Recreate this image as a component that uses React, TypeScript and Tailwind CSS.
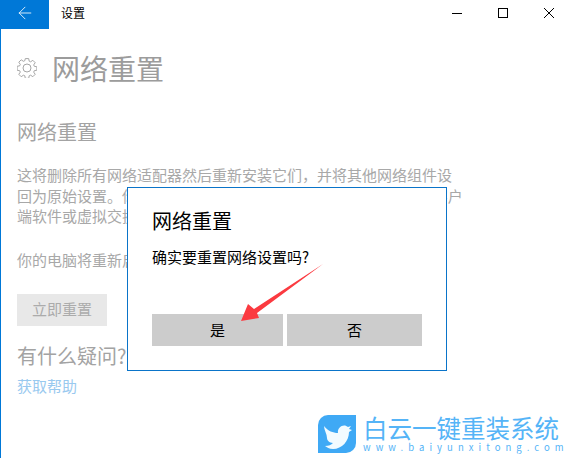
import { ArrowLeft } from "lucide-react";

const cjk = "font-['Noto_Sans_CJK_SC','Noto_Sans',sans-serif]";

function TitleBar() {
  return (
    <div className="flex h-[29px] items-start">
      <div className="flex h-full w-[48px] items-start justify-center bg-[#0078d7] pt-[3px]">
        <ArrowLeft className="h-5 w-5 text-white" strokeWidth={1} />
      </div>
      <span className="ml-3 pt-[4px] text-xs leading-[18px] text-black">设置</span>
      <div className="ml-auto flex h-[26px] items-center gap-[36px] pr-[17px]">
        <div className="h-px w-[10px] bg-black" />
        <div className="h-[10px] w-[10px] border border-black" />
        <svg className="h-[10px] w-[10px]" viewBox="0 0 10 10" stroke="black" strokeWidth="1">
          <path d="M0 0L10 10M10 0L0 10" />
        </svg>
      </div>
    </div>
  );
}

function GearIcon() {
  return (
    <svg className="h-5 w-5" viewBox="0 0 20 20" fill="none" stroke="#a6a6a6" strokeWidth="1">
      <path d="M8.3 .6h3.4l.5 2.6 1.4.6 2.2-1.5 2.4 2.4-1.5 2.2.6 1.4 2.6.5v3.4l-2.6.5-.6 1.4 1.5 2.2-2.4 2.4-2.2-1.5-1.4.6-.5 2.6H8.3l-.5-2.6-1.4-.6-2.2 1.5-2.4-2.4 1.5-2.2-.6-1.4-2.6-.5V8.3l2.6-.5.6-1.4L1.800 4.200l2.400-2.400 2.200 1.500 1.400-.6z" />
      <circle cx="10" cy="10" r="4" />
    </svg>
  );
}

function ResetPage() {
  return (
    <div className="flex flex-col pl-4">
      <div className="mt-[19px] flex h-10 items-center">
        <GearIcon />
        <h1 className="ml-[15px] text-[28px] leading-10 text-[#9c9c9c]">网络重置</h1>
      </div>
      <h2 className="mt-[30px] text-xl leading-7 text-[#a3a3a3]">网络重置</h2>
      <p className="mt-[19px] w-[448px] text-[15px] leading-[20.5px] text-[#a8a8a8] [word-spacing:2.5px]">
        这将删除所有网络适配器然后重新安装它们，并将其他网络组件设回为原始设置。你可能需要重新安装其他网络软件，比如 VPN 客户端软件或虚拟交换机软件。
      </p>
      <p className="mt-[23px] text-[15px] leading-5 text-[#a8a8a8]">你的电脑将重新启动。</p>
      <button className="mt-[24px] h-8 w-[90px] bg-[#e8e8e8] text-[15px] text-[#ababab]">立即重置</button>
      <h3 className="mt-4 text-xl leading-7 text-[#a3a3a3]">有什么疑问?</h3>
      <a className="mt-[6px] text-[15px] leading-5 text-[#99c9ef]">获取帮助</a>
    </div>
  );
}

function ConfirmDialog() {
  return (
    <div className="absolute left-[126px] top-[187px] flex h-[184px] w-[320px] flex-col border border-[#0a74c9] bg-white px-6 pt-[19px] text-black">
      <h2 className="text-xl leading-7">网络重置</h2>
      <p className="mt-[12px] text-[15px] leading-5">确实要重置网络设置吗?</p>
      <div className="mt-[47px] flex gap-1">
        <button className="h-8 w-[131px] bg-[#cccccc] text-[15px]">是</button>
        <button className="h-8 w-[135px] bg-[#cccccc] text-[15px]">否</button>
      </div>
    </div>
  );
}

function Arrow() {
  return (
    <svg className="absolute left-[234px] top-[260px] h-[65px] w-[90px]" viewBox="0 0 90 65">
      <path d="M88 4L19 49L13 44L6 61L24 58L22 53Z" fill="#fb3a40" />
    </svg>
  );
}

function Watermark() {
  return (
    <div className="absolute left-[317px] top-[415px] flex gap-[7px]">
      <div className="h-[38px] w-[38px] rounded-tl-[10px] rounded-br-[10px] bg-[#3fa9f5]">
        <svg className="h-[38px] w-[38px]" viewBox="0 0 38 38">
          <path
            d="M6 11C10 16 15 18 20 18C19 12 26 8 30 12L33 11L31 14L34 15L31 17C31 26 24 34 15 34C11 34 9 32 7 31C11 31 13 30 15 28C11 28 9 25 9 23C9 19 6 15 6 11Z"
            fill="#f2fbff"
          />
        </svg>
      </div>
      <div className="flex flex-col">
        <span className="mt-px text-[24.5px] leading-6 whitespace-nowrap text-[#55b4f7]">白云一键重装系统</span>
        <span className="mt-px text-[9.5px] leading-3 tracking-[5.05px] whitespace-nowrap text-[#55b4f7]">www.baiyunxitong.com</span>
      </div>
    </div>
  );
}

export default function App() {
  return (
    <div className={`relative h-[458px] w-[571px] overflow-hidden border-l border-[#0078d7] bg-white ${cjk}`}>
      <TitleBar />
      <ResetPage />
      <ConfirmDialog />
      <Arrow />
      <Watermark />
    </div>
  );
}
